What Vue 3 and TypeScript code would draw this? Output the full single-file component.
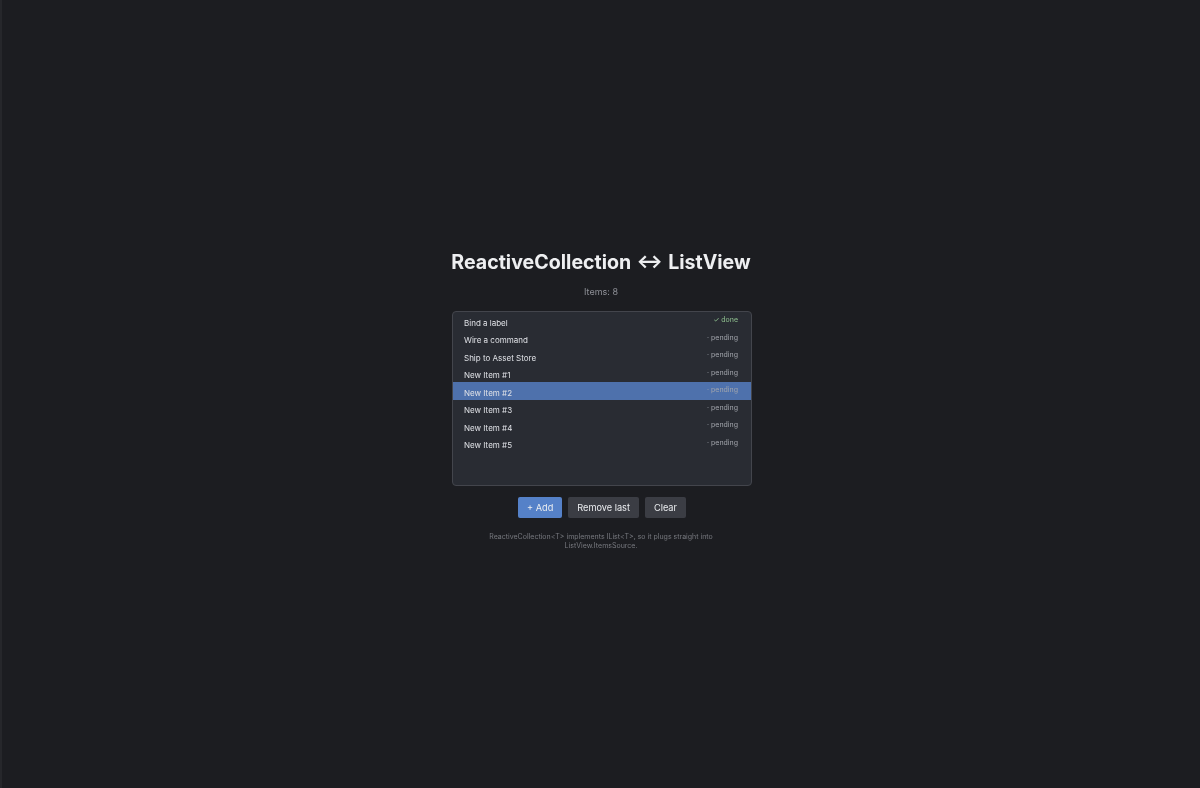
<script setup lang="ts">
interface Item { label: string; done: boolean }
const items: Item[] = [
  { label: 'Bind a label', done: true },
  { label: 'Wire a command', done: false },
  { label: 'Ship to Asset Store', done: false },
  { label: 'New Item #1', done: false },
  { label: 'New Item #2', done: false },
  { label: 'New Item #3', done: false },
  { label: 'New Item #4', done: false },
  { label: 'New Item #5', done: false },
]
const selected = 4
</script>

<template>
  <div class="page">
    <main class="panel">
      <h1 class="title">ReactiveCollection ↔ ListView</h1>
      <p class="count">Items: 8</p>
      <ul class="list">
        <li v-for="(item, i) in items" :key="item.label" class="row" :class="{ selected: i === selected }">
          <span class="label">{{ item.label }}</span>
          <span class="status" :class="{ done: item.done }">{{ item.done ? '✓ done' : '· pending' }}</span>
        </li>
      </ul>
      <div class="actions">
        <button class="btn primary">+ Add</button>
        <button class="btn">Remove last</button>
        <button class="btn">Clear</button>
      </div>
      <p class="note">ReactiveCollection&lt;T&gt; implements IList&lt;T&gt;, so it plugs straight into ListView.ItemsSource.</p>
    </main>
  </div>
</template>

<style>
html, body { margin: 0; background: #1c1d21; }
</style>

<style scoped>
.page {
  box-sizing: border-box;
  width: 1200px;
  height: 788px;
  padding-top: 12px;
  background: #1c1d21;
  border-left: 2px solid #26272b;
  display: flex;
  align-items: center;
  justify-content: center;
  font-family: Inter, "Liberation Sans", sans-serif;
}
.panel {
  width: 300px;
  display: flex;
  flex-direction: column;
  align-items: center;
  will-change: transform;
}
.title {
  margin: 0;
  font-size: 19.6px;
  line-height: 24px;
  font-weight: 700;
  word-spacing: 0.7px;
  color: #eeeff1;
  white-space: nowrap;
}
.count {
  margin: 12px 0 0;
  font-size: 9px;
  line-height: 12px;
  color: #8d8f96;
}
.list {
  box-sizing: border-box;
  list-style: none;
  flex: none;
  width: 300px;
  height: 175px;
  margin: 13px 0 0 2px;
  padding: 0;
  background: #292c33;
  border: 1px solid #43454c;
  border-radius: 4px;
}
.row {
  height: 17.5px;
  padding: 0 13px 0 11px;
  display: flex;
  justify-content: space-between;
  align-items: flex-start;
  font-size: 8px;
}
.row.selected { background: #4e71ac; }
.label { color: #dfe1e6; line-height: 12px; margin-top: 4.5px; }
.status { color: #a3a6ad; font-size: 7px; line-height: 10px; margin-top: 3px; }
.status.done { color: #8fc08f; }
.actions {
  display: flex;
  gap: 6px;
  margin: 11px 0 0 2px;
}
.btn {
  height: 21px;
  padding: 0 9px;
  border: none;
  border-radius: 2px;
  background: #3b3d44;
  color: #eceef1;
  font-family: inherit;
  font-size: 9.2px;
}
.btn.primary { background: #5581c8; }
.note {
  margin: 15px 0 0;
  width: 240px;
  font-size: 7px;
  line-height: 8.5px;
  text-align: center;
  color: #77797f;
}
</style>
